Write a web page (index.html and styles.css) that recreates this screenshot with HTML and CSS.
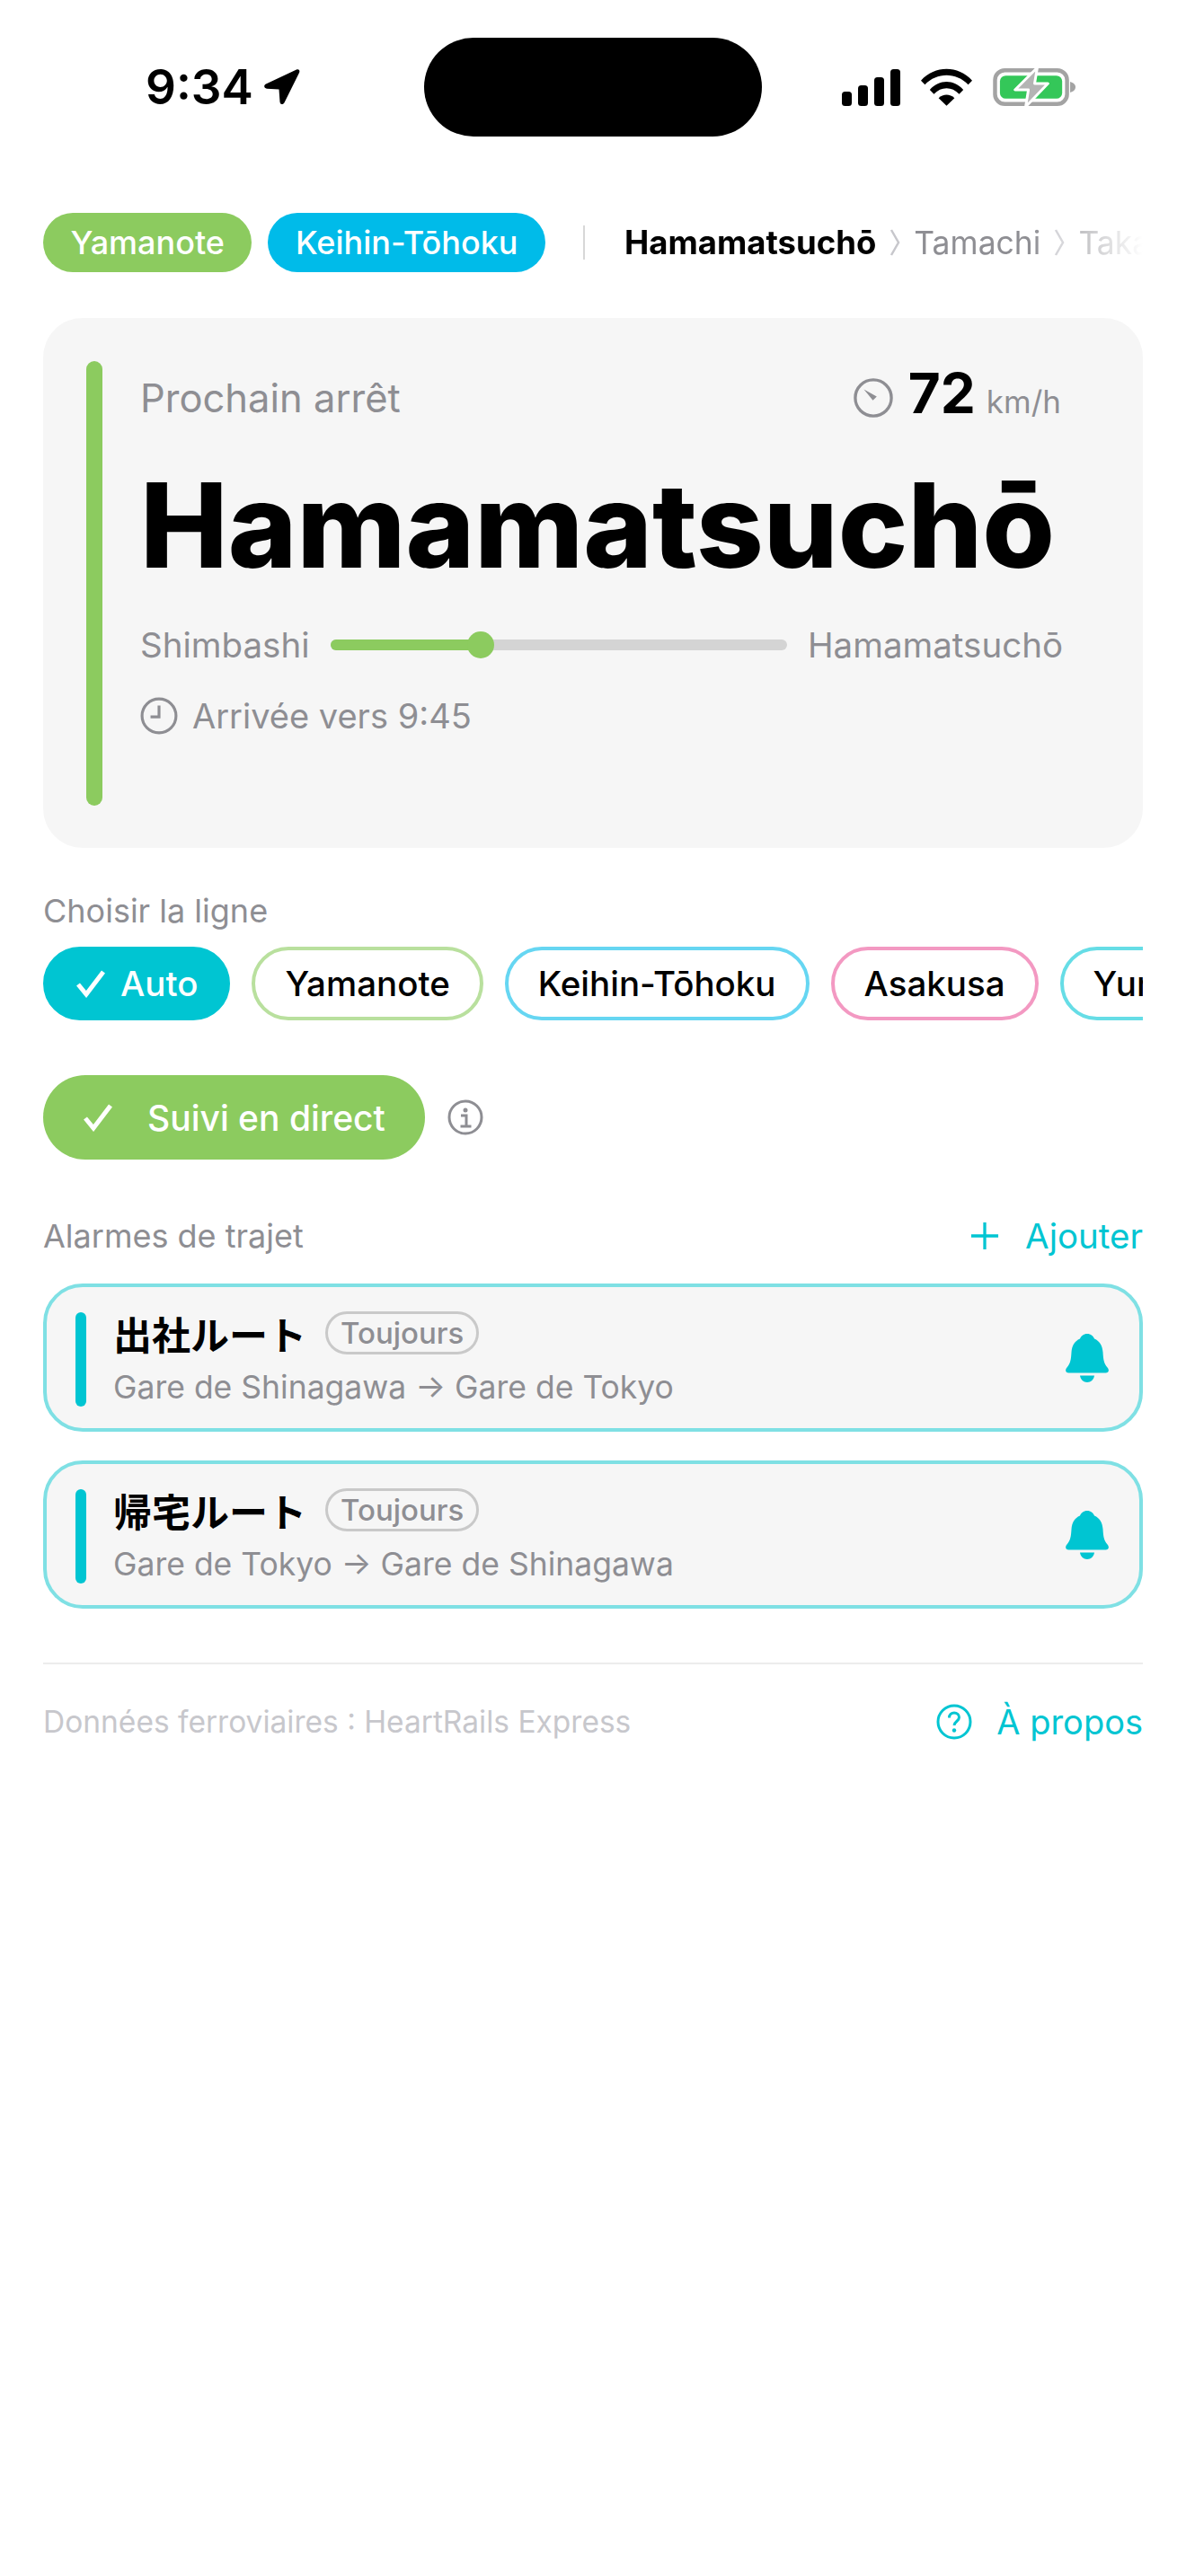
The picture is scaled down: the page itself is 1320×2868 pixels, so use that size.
FILE: index.html
```html
<!DOCTYPE html>
<html lang="fr">
<head>
    <meta charset="UTF-8">
    <meta name="viewport" content="width=device-width, initial-scale=1.0">
    <title>Prochain arrêt</title>
    <link rel="stylesheet" href="styles.css">
</head>
<body>

<div class="status-bar">
    <div class="status-left">
        <span class="clock">9:34</span>
        <svg class="loc-icon" viewBox="0 0 42 42"><path d="M38 1.500 4 17.500c-3 1.500-2 5 1 5.200l13.500.8 1 14c.3 3 3.700 3.500 5 .8L41 5c1.200-2.500-.6-4.500-3-3.500z"/></svg>
    </div>
    <div class="island"></div>
    <div class="status-right">
        <svg class="signal-icon" viewBox="0 0 65 41"><rect x="0" y="25" width="11" height="16" rx="3.500"/><rect x="18" y="18" width="11" height="23" rx="3.500"/><rect x="36" y="9" width="11" height="32" rx="3.500"/><rect x="54" y="0" width="11" height="41" rx="3.500"/></svg>
        <svg class="wifi-icon" viewBox="0 0 58 42"><path d="M0 13.500C16 -4 42 -4 58 13.500l-4.500 4.800C40 4 18 4 4.500 18.300z"/><path d="M10 24C21 12 37 12 48 24l-4.700 4.800C35 20 23 20 14.700 28.800z"/><path d="M20 33.500c5-5 13-5 18 0L29 42z"/></svg>
        <svg class="battery-icon" viewBox="0 0 94 46">
            <rect x="2.500" y="4" width="81" height="38" rx="11" fill="none" stroke="#a3a3a3" stroke-width="4.500"/>
            <rect x="8" y="10" width="70" height="26" rx="6.500" fill="#34c759"/>
            <path d="M87 17c3.500 1 6 3 6 6s-2.500 5-6 6z" fill="#a3a3a3"/>
            <path d="M50 1 25 26h15l-3 19 25-26H47z" fill="#b4b4b4" stroke="#fff" stroke-width="3" stroke-linejoin="round"/>
        </svg>
    </div>
</div>

<div class="page">
    <div class="top-row">
        <span class="tag tag-green">Yamanote</span>
        <span class="tag tag-blue">Keihin-Tōhoku</span>
        <span class="top-sep"></span>
        <div class="stations">
            <b>Hamamatsuchō</b>
            <svg class="chev" viewBox="0 0 12 30"><path d="M2 1l8 14-8 14"/></svg>
            <span>Tamachi</span>
            <svg class="chev" viewBox="0 0 12 30"><path d="M2 1l8 14-8 14"/></svg>
            <span>Takanawa Gateway</span>
        </div>
    </div>

    <div class="next-card">
        <div class="next-bar"></div>
        <div class="next-body">
            <div class="next-head">
                <span class="next-label">Prochain arrêt</span>
                <div class="speed">
                    <svg class="gauge-icon" viewBox="0 0 46 46"><circle cx="23" cy="23" r="21" fill="none" stroke="#8e8e93" stroke-width="3.500"/><path d="M12 13l15 8.500-4.500 4.500z" fill="#8e8e93"/></svg>
                    <span class="speed-num">72</span>
                    <span class="speed-unit">km/h</span>
                </div>
            </div>
            <div class="next-name">Hamamatsuchō</div>
            <div class="progress-row">
                <span>Shimbashi</span>
                <div class="track"><div class="track-fill"></div><div class="track-dot"></div></div>
                <span>Hamamatsuchō</span>
            </div>
            <div class="arrival">
                <svg class="clock-icon" viewBox="0 0 40 40"><circle cx="20" cy="20" r="18" fill="none" stroke="#8e8e93" stroke-width="3"/><path d="M20 9v12h-9" fill="none" stroke="#8e8e93" stroke-width="3"/></svg>
                <span>Arrivée vers 9:45</span>
            </div>
        </div>
    </div>

    <div class="section-label">Choisir la ligne</div>
    <div class="line-row">
        <span class="line-chip chip-auto"><svg class="check-icon" viewBox="0 0 34 32"><path d="M3 17l9 11L31 3"/></svg>Auto</span>
        <span class="line-chip chip-yamanote">Yamanote</span>
        <span class="line-chip chip-keihin">Keihin-Tōhoku</span>
        <span class="line-chip chip-asakusa">Asakusa</span>
        <span class="line-chip chip-yuri">Yurikamome</span>
    </div>

    <div class="live-row">
        <span class="live-btn"><svg class="check-icon" viewBox="0 0 34 32"><path d="M3 17l9 11L31 3"/></svg>Suivi en direct</span>
        <svg class="info-icon" viewBox="0 0 40 40"><circle cx="20" cy="20" r="18" fill="none" stroke="#8e8e93" stroke-width="3"/><circle cx="20" cy="12" r="2.500" fill="#8e8e93"/><path d="M15 18h6v12M14.500 30h12" fill="none" stroke="#8e8e93" stroke-width="3"/></svg>
    </div>

    <div class="alarm-head">
        <span class="section-label">Alarmes de trajet</span>
        <span class="add-link"><svg class="plus-icon" viewBox="0 0 34 34"><path d="M17 1v32M1 17h32"/></svg>Ajouter</span>
    </div>

    <div class="alarm-card">
        <div class="alarm-bar"></div>
        <div class="alarm-text">
            <div class="alarm-title"><b>出社ルート</b><span class="badge">Toujours</span></div>
            <div class="alarm-route">Gare de Shinagawa → Gare de Tokyo</div>
        </div>
        <svg class="bell-icon" viewBox="0 0 48 54"><path d="M24 0c4 0 7 2.500 8 5.500 6 2.500 9 8 9.500 15 .5 8 1 12.500 5 17 2.500 3 1.500 6-2 6H3.500c-3.500 0-4.500-3-2-6 4-4.500 4.500-9 5-17C7 13.500 10 8 16 5.500 17 2.500 20 0 24 0z"/><path d="M16 46.500h16C31.500 51 28 54 24 54s-7.500-3-8-7.500z"/></svg>
    </div>

    <div class="alarm-card">
        <div class="alarm-bar"></div>
        <div class="alarm-text">
            <div class="alarm-title"><b>帰宅ルート</b><span class="badge">Toujours</span></div>
            <div class="alarm-route">Gare de Tokyo → Gare de Shinagawa</div>
        </div>
        <svg class="bell-icon" viewBox="0 0 48 54"><path d="M24 0c4 0 7 2.500 8 5.500 6 2.500 9 8 9.500 15 .5 8 1 12.500 5 17 2.500 3 1.500 6-2 6H3.500c-3.500 0-4.500-3-2-6 4-4.500 4.500-9 5-17C7 13.500 10 8 16 5.500 17 2.500 20 0 24 0z"/><path d="M16 46.500h16C31.500 51 28 54 24 54s-7.500-3-8-7.500z"/></svg>
    </div>

    <div class="footer">
        <span class="footer-note">Données ferroviaires : HeartRails Express</span>
        <span class="add-link about-link"><svg class="help-icon" viewBox="0 0 40 40"><circle cx="20" cy="20" r="18" fill="none" stroke="#00c5d2" stroke-width="3"/><path d="M14.500 15.500c0-3.500 2.500-5.500 5.500-5.500s5.500 2 5.500 5c0 4.500-5.500 4.500-5.500 9" fill="none" stroke="#00c5d2" stroke-width="3"/><circle cx="20" cy="29.500" r="2.200" fill="#00c5d2"/></svg>À propos</span>
    </div>
</div>

</body>
</html>
```

FILE: styles.css
```css
* {
    box-sizing: border-box;
}

body {
    margin: 0;
    background-color: #fff;
    color: #000;
    font-family: Inter, "Noto Sans CJK JP", sans-serif;
}

.status-bar {
    height: 194px;
    padding: 42px 122px 0 162px;
    display: flex;
    align-items: flex-start;
    justify-content: space-between;
}

.status-left {
    width: 310px;
    height: 110px;
    display: flex;
    align-items: center;
    gap: 10px;
}

.clock {
    font-size: 53px;
    font-weight: 600;
}

.loc-icon {
    width: 42px;
    height: 42px;
}

.island {
    width: 376px;
    height: 110px;
    background-color: #000;
    border-radius: 55px;
}

.status-right {
    height: 110px;
    margin-left: auto;
    display: flex;
    align-items: center;
    gap: 23px;
}

.signal-icon {
    width: 65px;
    height: 41px;
}

.wifi-icon {
    width: 57px;
    height: 42px;
}

.battery-icon {
    width: 93px;
    height: 46px;
}

.page {
    padding: 43px 48px 0;
}

.top-row {
    display: flex;
    align-items: center;
    height: 66px;
}

.tag {
    height: 66px;
    padding: 0 30.5px;
    display: flex;
    align-items: center;
    margin-right: 18px;
    border-radius: 33px;
    color: #fff;
    font-size: 36px;
    font-weight: 500;
    white-space: nowrap;
}

.tag-green {
    background-color: #8ccb5f;
}

.tag-blue {
    background-color: #00bbe9;
}

.top-sep {
    width: 2px;
    height: 38px;
    margin: 0 44px 0 24px;
    background-color: #d8d8d8;
}

.stations {
    flex: 1;
    display: flex;
    align-items: center;
    gap: 15px;
    overflow: hidden;
    white-space: nowrap;
    color: #8e8e93;
    font-size: 35.5px;
    mask-image: linear-gradient(to right, #000 78%, transparent 100%);
}

.stations b {
    color: #000;
    font-size: 36.5px;
    font-weight: 700;
}

.chev {
    width: 12px;
    height: 30px;
    flex-shrink: 0;
    fill: none;
    stroke: #c7c7cc;
    stroke-width: 2.500;
}

.next-card {
    height: 590px;
    margin-top: 51px;
    padding: 48px 48px 47px;
    display: flex;
    background-color: #f6f6f6;
    border-radius: 44px;
}

.next-bar {
    width: 18px;
    border-radius: 9px;
    background-color: #8ccb5f;
}

.next-body {
    flex: 1;
    min-width: 0;
    margin-left: 42px;
}

.next-head {
    display: flex;
    align-items: center;
    justify-content: space-between;
    height: 64px;
    margin-top: 9px;
    padding-right: 43px;
}

.next-label {
    font-size: 43.5px;
    color: #8e8e93;
}

.speed {
    display: flex;
    align-items: baseline;
    margin-bottom: 12px;
}

.gauge-icon {
    width: 44px;
    height: 44px;
    margin: 12px 17px 0 0;
    align-self: center;
}

.speed-num {
    font-size: 62px;
    font-weight: 700;
    margin-right: 12px;
}

.speed-unit {
    font-size: 35px;
    color: #8e8e93;
}

.next-name {
    margin-top: 35px;
    font-size: 130.5px;
    font-weight: 800;
    line-height: 150px;
    white-space: nowrap;
}

.progress-row {
    margin-top: 35px;
    display: flex;
    align-items: center;
    gap: 23px;
    color: #8e8e93;
    font-size: 38.5px;
    padding-right: 41px;
}

.track {
    flex: 1;
    height: 12px;
    position: relative;
    border-radius: 6px;
    background-color: #d4d4d4;
}

.track-fill {
    width: 33%;
    height: 12px;
    border-radius: 6px;
    background-color: #8ccb5f;
}

.track-dot {
    position: absolute;
    left: 33%;
    top: -9px;
    width: 30px;
    height: 30px;
    margin-left: -15px;
    border-radius: 50%;
    background-color: #8ccb5f;
}

.arrival {
    margin-top: 33px;
    display: flex;
    align-items: center;
    gap: 16px;
    color: #8e8e93;
    font-size: 38px;
}

.clock-icon {
    width: 42px;
    height: 42px;
}

.section-label {
    color: #8e8e93;
    font-size: 36px;
}

.page > .section-label {
    margin-top: 48px;
}

.line-row {
    margin-top: 18px;
    display: flex;
    gap: 24px;
    overflow: hidden;
}

.line-chip {
    height: 82px;
    padding: 0 33px;
    display: flex;
    align-items: center;
    flex-shrink: 0;
    border: 4px solid;
    border-radius: 41px;
    font-size: 38.5px;
    font-weight: 500;
    white-space: nowrap;
}

.chip-auto {
    gap: 16px;
    padding: 0 32px;
    border-color: #00c5d2;
    background-color: #00c5d2;
    color: #fff;
}

.chip-yamanote {
    border-color: #b9e09e;
}

.chip-keihin {
    border-color: #66d6f2;
}

.chip-asakusa {
    border-color: #f399c2;
}

.chip-yuri {
    border-color: #66dde6;
}

.check-icon {
    width: 34px;
    height: 32px;
    fill: none;
    stroke: #fff;
    stroke-width: 5;
}

.live-row {
    margin-top: 61px;
    display: flex;
    align-items: center;
    gap: 25px;
}

.live-btn {
    height: 94px;
    padding: 0 44px;
    display: flex;
    align-items: center;
    gap: 38px;
    border-radius: 47px;
    background-color: #8ccb5f;
    color: #fff;
    font-size: 39px;
    font-weight: 500;
}

.info-icon {
    width: 40px;
    height: 40px;
}

.alarm-head {
    margin-top: 62px;
    margin-bottom: -2px;
    display: flex;
    align-items: center;
    justify-content: space-between;
}

.add-link {
    display: flex;
    align-items: center;
    gap: 29px;
    color: #00c5d2;
    font-size: 38.5px;
}

.plus-icon {
    width: 32px;
    height: 32px;
    fill: none;
    stroke: #00c5d2;
    stroke-width: 3.500;
}

.alarm-card {
    height: 165px;
    margin-top: 32px;
    padding: 25px 34px 24px 32px;
    display: flex;
    align-items: stretch;
    border: 4px solid #7fe0e4;
    border-radius: 44px;
    background-color: #f6f6f6;
}

.alarm-bar {
    width: 12px;
    margin-top: 3px;
    border-radius: 6px;
    background-color: #00c5d2;
}

.alarm-text {
    flex: 1;
    margin-left: 30px;
}

.alarm-title {
    display: flex;
    align-items: center;
    gap: 21px;
    height: 52px;
}

.alarm-title b {
    font-size: 43px;
    font-weight: 700;
}

.badge {
    height: 48px;
    padding: 0 14px;
    display: flex;
    align-items: center;
    border: 3px solid #c9c9c9;
    border-radius: 24px;
    color: #8e8e93;
    font-size: 33px;
    font-weight: 500;
}

.alarm-route {
    margin-top: 13px;
    color: #8e8e93;
    font-size: 35.5px;
}

.bell-icon {
    width: 48px;
    height: 54px;
    align-self: center;
    fill: #00c5d2;
}

.footer {
    margin-top: 60px;
    padding-top: 41px;
    display: flex;
    align-items: center;
    justify-content: space-between;
    border-top: 2px solid #ececec;
}

.footer-note {
    color: #c7c7cc;
    font-size: 33.5px;
}

.about-link {
    gap: 27px;
    font-size: 38px;
}

.help-icon {
    width: 40px;
    height: 40px;
}
```
